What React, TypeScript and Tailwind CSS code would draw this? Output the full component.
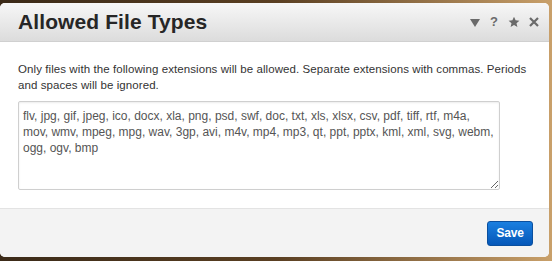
import { useState } from "react";

const EXTENSIONS =
  "flv, jpg, gif, jpeg, ico, docx, xla, png, psd, swf, doc, txt, xls, xlsx, csv, pdf, tiff, rtf, m4a, mov, wmv, mpeg, mpg, wav, 3gp, avi, m4v, mp4, mp3, qt, ppt, pptx, kml, xml, svg, webm, ogg, ogv, bmp";

export default function App() {
  const [value, setValue] = useState(EXTENSIONS);

  return (
    <div
      className="w-[552px] h-[261px] pt-[3px] pr-[3px] pb-[4px] bg-gradient-to-r from-[#3b2a18] via-[#5a3f22] to-[#c9a06a]"
      style={{ fontFamily: '"Liberation Sans", Arial, sans-serif' }}
    >
      <div className="h-full flex flex-col rounded-[5px] overflow-hidden bg-white">
        {/* header */}
        <div className="h-[39px] flex items-center justify-between pl-[18px] pr-[10px] bg-gradient-to-b from-[#f7f7f7] to-[#dcdcdc] border-b border-[#d0d0d0]">
          <h1 className="text-[21px] font-bold text-[#262626] tracking-[0.1px]">Allowed File Types</h1>
          <div className="flex items-center gap-[9px] text-[#6a6a6a] text-[13px] font-bold">
            <svg width="10" height="8" viewBox="0 0 10 8" className="mt-[2px]">
              <path d="M0 0 H10 L5 8 Z" fill="currentColor" />
            </svg>
            <span className="w-[10px] text-center">?</span>
            <svg width="12" height="12" viewBox="0 0 24 24">
              <path
                d="M12 1.5l3.2 7.1 7.6.7-5.8 5.1 1.8 7.6L12 18l-6.8 4 1.8-7.6L1.2 9.3l7.6-.7z"
                fill="currentColor"
              />
            </svg>
            <svg width="10" height="10" viewBox="0 0 10 10">
              <path d="M1 1 L9 9 M9 1 L1 9" stroke="currentColor" strokeWidth="2.2" />
            </svg>
          </div>
        </div>

        {/* body */}
        <div className="flex-1 px-[18px] pt-[19px]">
          <p className="text-[11.5px] leading-[16px] tracking-[0.08px] text-[#333] whitespace-nowrap">
            Only files with the following extensions will be allowed. Separate extensions with commas. Periods
            <br />
            and spaces will be ignored.
          </p>
          <textarea
            value={value}
            onChange={(e) => setValue(e.target.value)}
            className="mt-[8px] block w-[482px] h-[89px] border border-[#cfcfcf] rounded-[2px] pl-[4px] pr-[2px] pt-[6px] text-[12px] leading-[16px] text-[#555] shadow-[inset_0_1px_2px_rgba(0,0,0,0.08)] outline-none resize-y"
            style={{ fontFamily: '"Liberation Sans", Arial, sans-serif' }}
          />
        </div>

        {/* footer */}
        <div className="h-[49px] flex items-center justify-end pr-[16px] bg-[#f3f3f3] border-t border-[#e3e3e3]">
          <button className="w-[46px] h-[25px] rounded-[3px] border border-[#0a4f9e] bg-gradient-to-b from-[#1a7fe0] to-[#0657b8] text-white text-[12px] font-bold tracking-[-0.2px]">
            Save
          </button>
        </div>
      </div>
    </div>
  );
}
